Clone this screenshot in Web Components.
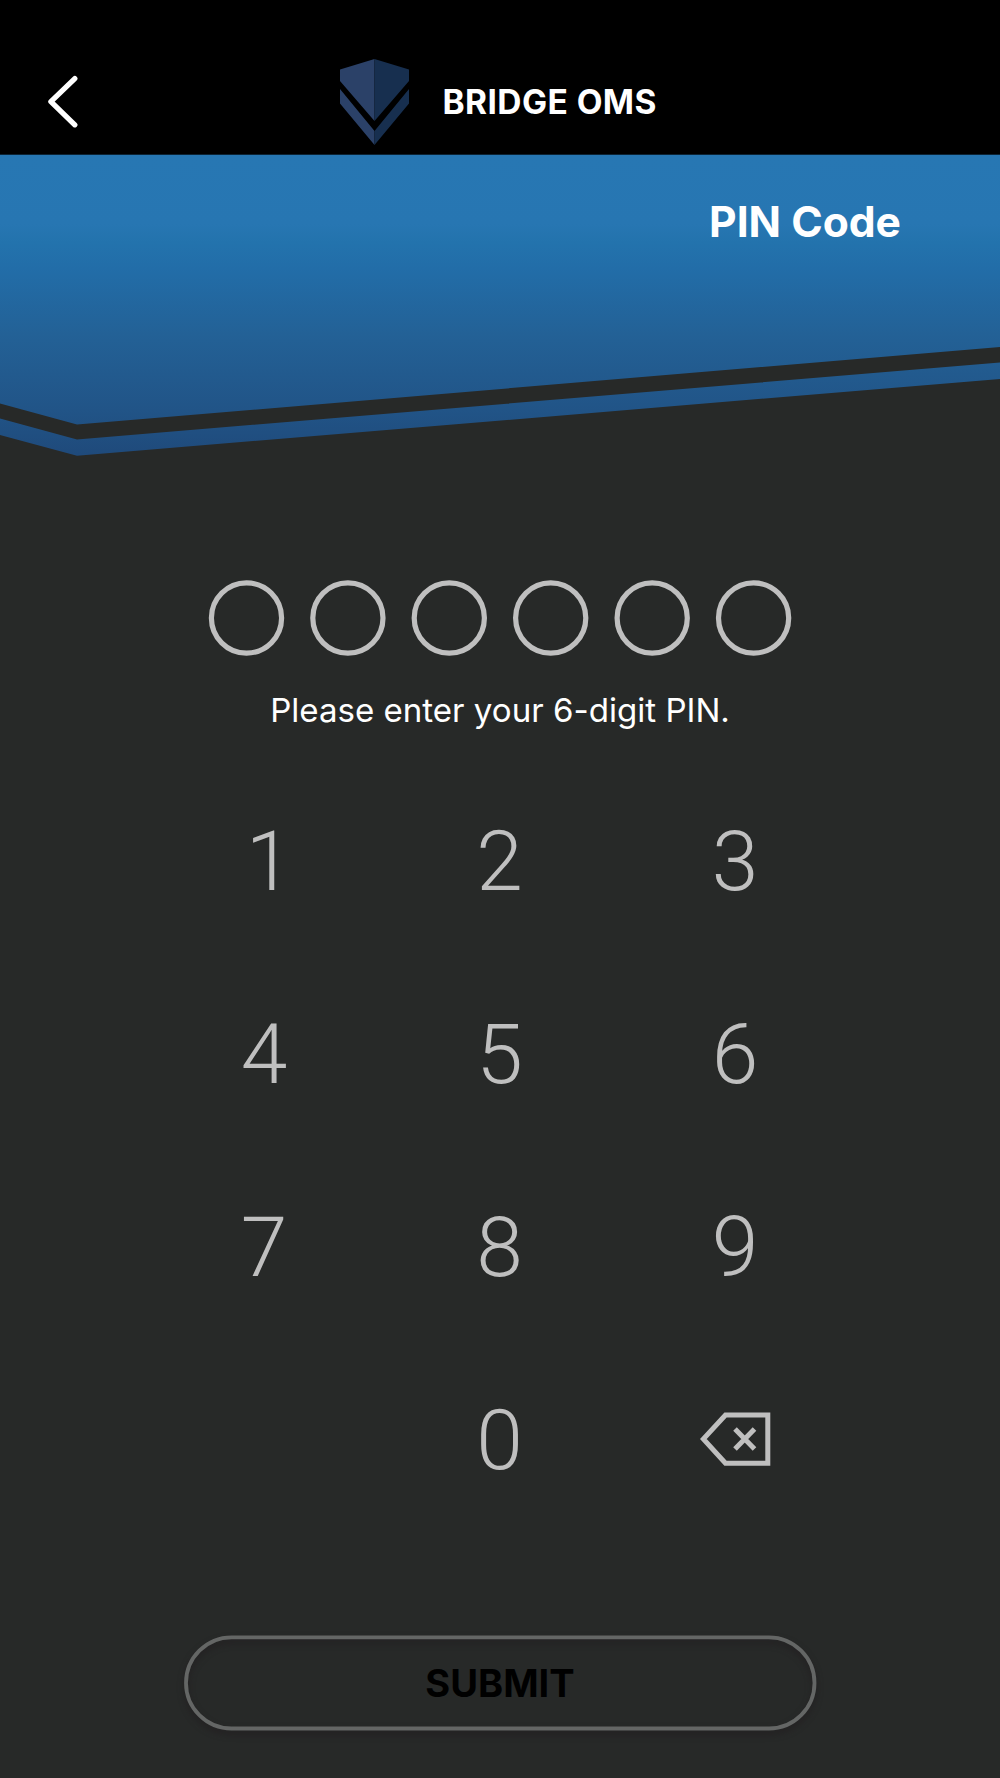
<!DOCTYPE html>
<html lang="en">
<head>
<meta charset="utf-8">
<title>Bridge OMS</title>
<style>
body{margin:0;background:#272928;font-family:Inter,"Liberation Sans",sans-serif}
</style>
</head>
<body>
<pin-screen></pin-screen>
<script>
const define = (name, html) => customElements.define(name, class extends HTMLElement {
  constructor() {
    super();
    this.attachShadow({ mode: 'open' }).innerHTML = html;
  }
});

define('back-button', `
<style>:host{display:block;width:32px;height:54px}svg{display:block}</style>
<svg width="32" height="54" viewBox="0 0 32 54" fill="none" stroke="#fff" stroke-width="5.300" stroke-linecap="round" stroke-linejoin="round"><path d="M26.800 3.600L2.900 26.600 26.800 49.800"/></svg>`);

define('brand-logo', `
<style>:host{display:block;width:70px;height:86px}svg{display:block}</style>
<svg width="70" height="86" viewBox="0 0 70 86">
<path fill="#2b4168" d="M0 10.500L34.500 0V62L0 22ZM0 30L34.500 72V86L0 44.500Z"/>
<path fill="#172f4f" d="M34.500 0L69 10.500V22L34.500 62ZM69 30V44.500L34.500 86V72Z"/>
</svg>`);

define('app-header', `
<style>
:host{display:flex;box-sizing:border-box;height:155px;background:#000;padding:58.500px 0 0 48px;align-items:flex-start;color:#fff;border-bottom:1px solid #0c2436}
back-button{margin-top:16px}
brand-logo{margin-left:260px}
.name{margin:23px 0 0 32.500px;font-size:33.500px;line-height:40px;font-weight:700;letter-spacing:.42px;white-space:nowrap}
</style>
<back-button></back-button><brand-logo></brand-logo><div class="name"><slot></slot></div>`);

define('hero-banner', `
<style>
:host{display:grid;height:305px;color:#fff}
svg,.title{grid-area:1/1}
svg{display:block}
.title{z-index:1;justify-self:end;padding:41px 99px 0 0;font-size:42.600px;line-height:52px;font-weight:700;white-space:nowrap}
</style>
<svg width="1000" height="305" viewBox="0 155 1000 305">
<defs><linearGradient id="g" gradientUnits="userSpaceOnUse" x1="0" y1="155" x2="0" y2="455">
<stop offset="0" stop-color="#2777b3"/><stop offset=".23" stop-color="#2776b2"/><stop offset=".29" stop-color="#2373ad"/><stop offset=".38" stop-color="#226da8"/><stop offset=".6" stop-color="#236196"/><stop offset=".85" stop-color="#215487"/><stop offset="1" stop-color="#1f4a7b"/>
</linearGradient></defs>
<path fill="url(#g)" d="M0 155H1000V347L77 424.500L0 403.500ZM0 418.500L77 439.500L1000 362.500V379L77 455.700L0 435Z"/>
</svg>
<div class="title"><slot></slot></div>`);

define('pin-dots', `
<style>
:host{display:flex;justify-content:center}
svg{display:block}
</style>
<svg width="600" height="76" viewBox="200 580 600 76" fill="none" stroke="#bfbfbf" stroke-width="5.200">
<circle cx="246.500" cy="618" r="35.100"/><circle cx="347.900" cy="618" r="35.100"/><circle cx="449.300" cy="618" r="35.100"/>
<circle cx="550.700" cy="618" r="35.100"/><circle cx="652.200" cy="618" r="35.100"/><circle cx="753.600" cy="618" r="35.100"/>
</svg>`);

define('pin-key', `
<style>
:host{display:flex;align-items:center;justify-content:center;color:#bfbfbf;font:300 84px/100px Roboto,sans-serif}
</style><slot></slot>`);

define('erase-icon', `
<style>:host{display:block;width:72px;height:56px}svg{display:block}</style>
<svg width="72" height="56" viewBox="0 0 72 56" fill="none" stroke="#bfbfbf" stroke-width="5"><path d="M25.500 4H67.800V52.200H25.500L3.300 28Z"/><path d="M35 18L54.500 38M54.500 18L35 38"/></svg>`);

define('key-pad', `
<style>
:host{display:grid;width:706.500px;margin:0 auto;grid-template-columns:repeat(3,1fr);grid-auto-rows:193px}
pin-key{padding:4px 1px 0 0}
.one{padding-left:10px}
.erase{padding:0}
</style>
<pin-key class="one">1</pin-key><pin-key>2</pin-key><pin-key>3</pin-key>
<pin-key>4</pin-key><pin-key>5</pin-key><pin-key>6</pin-key>
<pin-key>7</pin-key><pin-key>8</pin-key><pin-key>9</pin-key>
<span></span><pin-key>0</pin-key><pin-key class="erase"><erase-icon></erase-icon></pin-key>`);

define('submit-button', `
<style>
:host{display:grid;width:632px;height:96px;margin:0 auto;color:#000;font-size:38px;line-height:46px;font-weight:700}
svg,span{grid-area:1/1}
svg{display:block;overflow:visible;filter:drop-shadow(0 4px 3px rgba(30,24,27,.6))}
span{z-index:1;place-self:center}
</style>
<svg width="632" height="96" viewBox="0 0 632 96"><rect x="2" y="2.300" width="628.500" height="91.200" rx="45.600" fill="none" stroke="#646665" stroke-width="3.800"/></svg>
<span><slot></slot></span>`);

define('pin-screen', `
<style>
:host{display:flex;flex-direction:column;height:1778px;overflow:hidden;background:#272928}
pin-dots{margin-top:120px}
.hint{margin-top:34px;text-align:center;color:#fff;font-size:33.100px;line-height:40px}
key-pad{margin-top:33px}
submit-button{margin-top:100px}
</style>
<app-header>BRIDGE OMS</app-header>
<hero-banner>PIN Code</hero-banner>
<pin-dots></pin-dots>
<div class="hint">Please enter your 6-digit PIN.</div>
<key-pad></key-pad>
<submit-button>SUBMIT</submit-button>`);
</script>
</body>
</html>
